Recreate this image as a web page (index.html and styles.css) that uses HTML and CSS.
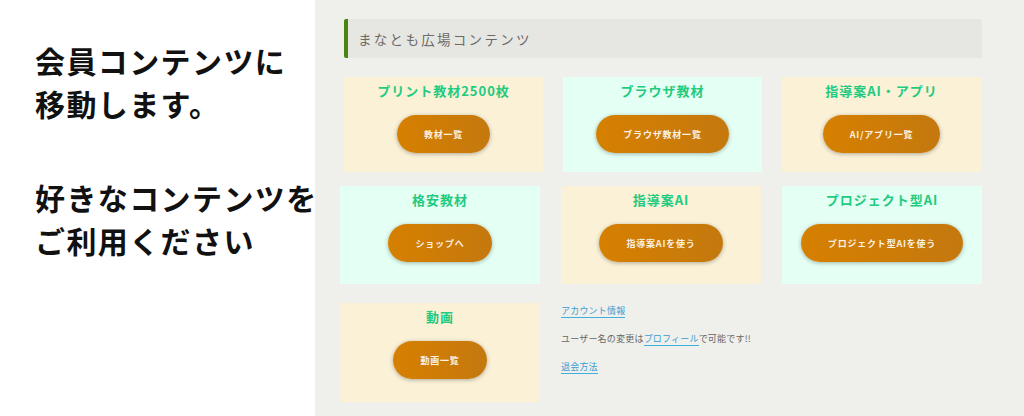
FILE: index.html
```html
<!DOCTYPE html>
<html lang="ja">
<head>
    <meta charset="UTF-8">
    <meta name="viewport" content="width=device-width, initial-scale=1.0">
    <title>まなとも広場コンテンツ</title>
    <link rel="stylesheet" href="styles.css">
</head>
<body>
    <div class="page">
        <div class="intro">
            <p>会員コンテンツに<br>移動します。</p>
            <p>好きなコンテンツを<br>ご利用ください</p>
        </div>

        <div class="main">
            <h2 class="section-title">まなとも広場コンテンツ</h2>

            <div class="row row-top">
                <div class="card cream">
                    <h3>プリント教材2500枚</h3>
                    <a class="btn" href="#">教材一覧</a>
                </div>
                <div class="card mint">
                    <h3>ブラウザ教材</h3>
                    <a class="btn" href="#">ブラウザ教材一覧</a>
                </div>
                <div class="card cream">
                    <h3>指導案AI・アプリ</h3>
                    <a class="btn" href="#">AI/アプリ一覧</a>
                </div>
            </div>

            <div class="row row-mid">
                <div class="card mint">
                    <h3>格安教材</h3>
                    <a class="btn" href="#">ショップへ</a>
                </div>
                <div class="card cream">
                    <h3>指導案AI</h3>
                    <a class="btn" href="#">指導案AIを使う</a>
                </div>
                <div class="card mint">
                    <h3>プロジェクト型AI</h3>
                    <a class="btn" href="#">プロジェクト型AIを使う</a>
                </div>
            </div>

            <div class="row row-bottom">
                <div class="card cream">
                    <h3>動画</h3>
                    <a class="btn" href="#">動画一覧</a>
                </div>
                <div class="account-links">
                    <p><a href="#">アカウント情報</a></p>
                    <p>ユーザー名の変更は<a href="#">プロフィール</a>で可能です!!</p>
                    <p><a href="#">退会方法</a></p>
                </div>
            </div>
        </div>
    </div>
</body>
</html>
```

FILE: styles.css
```css
body {
    margin: 0;
    font-family: "Noto Sans CJK JP", "Noto Sans", sans-serif;
    background-color: #ffffff;
}
.page {
    display: flex;
    height: 416px;
    overflow: hidden;
}

/* 左の案内テキスト */
.intro {
    width: 280px;
    padding-left: 35px;
    padding-top: 39px;
    background-color: #ffffff;
    flex-shrink: 0;
}
.intro p {
    margin: 0 0 51px;
    font-size: 30px;
    font-weight: bold;
    line-height: 43px;
    letter-spacing: 1.4px;
    color: #111111;
    white-space: nowrap;
}

/* 右側のコンテンツ */
.main {
    flex: 1;
    background-color: #eff0eb;
    padding: 19px 44px 0 25px;
}
.section-title {
    margin: 0 0 0 4px;
    height: 39px;
    display: flex;
    align-items: center;
    padding-left: 10px;
    background-color: #e6e7e2;
    border-left: 4px solid #4a8512;
    border-radius: 2px;
    font-size: 13.5px;
    font-weight: normal;
    letter-spacing: 2.3px;
    color: #6a6a6a;
}

.row {
    display: grid;
    grid-template-columns: 200px 200px 200px;
    column-gap: 21px;
}
.row-top {
    margin: 19px 0 0 4px;
    grid-template-columns: 199px 199px 199px;
    column-gap: 20px;
}
.row-top .card {
    height: 95px;
}
.row-mid {
    margin-top: 14px;
}
.row-mid .card {
    height: 98px;
}
.row-bottom {
    margin-top: 19px;
    grid-template-columns: 200px 421px;
}
.row-bottom .card {
    height: 99px;
}

.card {
    display: flex;
    flex-direction: column;
    align-items: center;
    padding-top: 4px;
    box-sizing: border-box;
}
.card.cream {
    background-color: #faf1d7;
}
.card.mint {
    background-color: #e4fff3;
}
.card h3 {
    margin: 0;
    font-size: 13px;
    line-height: 20px;
    letter-spacing: 1px;
    font-weight: bold;
    color: #1fcb7f;
}
.btn {
    margin-top: 14px;
    height: 38px;
    padding: 0 27px;
    display: inline-flex;
    align-items: center;
    border-radius: 19px;
    background: linear-gradient(90deg, #d68000, #c4780e);
    box-shadow: 0 1px 4px rgba(0, 0, 0, 0.3);
    color: #fbf1e2;
    font-size: 9px;
    font-weight: bold;
    letter-spacing: 0.8px;
    text-decoration: none;
    white-space: nowrap;
}

/* アカウント関連リンク */
.account-links p {
    margin: 0 0 12px;
    font-size: 9px;
    line-height: 16px;
    letter-spacing: 0.2px;
    color: #666666;
}
.account-links a {
    color: #3a9cd2;
    text-decoration: none;
    border-bottom: 1px solid #3fb0dc;
}
```
